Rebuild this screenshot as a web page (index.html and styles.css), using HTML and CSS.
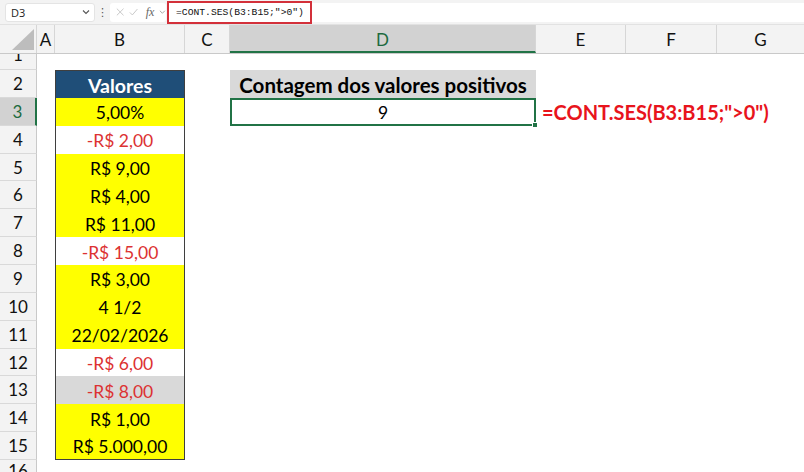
FILE: index.html
```html
<!DOCTYPE html>
<html>
<head>
<meta charset="utf-8">
<link rel="stylesheet" href="styles.css">
</head>
<body>
<div class="topbar">
  <div class="namebox"><span class="nb-text">D3</span><svg class="chev" width="8" height="6" viewBox="0 0 8 6"><path d="M1 1.5 L4 4.5 L7 1.5" fill="none" stroke="#555" stroke-width="1.1"/></svg></div>
  <div class="dots">⋮</div>
  <div class="iconbox">
    <svg width="10" height="10" viewBox="0 0 10 10"><path d="M1 1 L9 9 M9 1 L1 9" stroke="#c4c4c4" stroke-width="1.1" fill="none"/></svg>
    <svg width="11" height="10" viewBox="0 0 11 10"><path d="M1 5.5 L4 8.5 L10 1.5" stroke="#c4c4c4" stroke-width="1.1" fill="none"/></svg>
    <span class="fx">fx</span>
    <svg width="8" height="6" viewBox="0 0 8 6"><path d="M1 1.5 L4 4.5 L7 1.5" fill="none" stroke="#999" stroke-width="1"/></svg>
  </div>
  <div class="formula">=CONT.SES(B3:B15;"&gt;0")</div>
  <div class="formula-rest"></div>
</div>
<div class="colheads">
  <div class="corner"><div class="tri"></div></div>
  <div class="ch w-a">A</div>
  <div class="ch w-b">B</div>
  <div class="ch w-c">C</div>
  <div class="ch w-d sel">D</div>
  <div class="ch w-e">E</div>
  <div class="ch w-f">F</div>
  <div class="ch w-g">G</div>
</div>
<div class="body">
  <div class="rowheads">
    <div class="rh r1"><span>1</span></div>
    <div class="rh">2</div>
    <div class="rh rsel">3</div>
    <div class="rh">4</div>
    <div class="rh">5</div>
    <div class="rh">6</div>
    <div class="rh">7</div>
    <div class="rh">8</div>
    <div class="rh">9</div>
    <div class="rh">10</div>
    <div class="rh">11</div>
    <div class="rh">12</div>
    <div class="rh">13</div>
    <div class="rh">14</div>
    <div class="rh">15</div>
    <div class="rh r16"><span>16</span></div>
  </div>
  <div class="col w-a"></div>
  <div class="col w-b colb">
    <div class="table">
      <div class="cell head">Valores</div>
      <div class="cell yel">5,00%</div>
      <div class="cell neg">-R$ 2,00</div>
      <div class="cell yel">R$ 9,00</div>
      <div class="cell yel">R$ 4,00</div>
      <div class="cell yel">R$ 11,00</div>
      <div class="cell neg">-R$ 15,00</div>
      <div class="cell yel">R$ 3,00</div>
      <div class="cell yel">4 1/2</div>
      <div class="cell yel">22/02/2026</div>
      <div class="cell neg">-R$ 6,00</div>
      <div class="cell neg gray">-R$ 8,00</div>
      <div class="cell yel">R$ 1,00</div>
      <div class="cell yel">R$ 5.000,00</div>
    </div>
  </div>
  <div class="col w-c"></div>
  <div class="col w-d cold">
    <div class="dhead">Contagem dos valores positivos</div>
    <div class="dres">9<div class="handle"></div></div>
  </div>
  <div class="col cole">
    <div class="note">=CONT.SES(B3:B15;"&gt;0")</div>
  </div>
</div>
</body>
</html>
```

FILE: styles.css
```css
* { box-sizing: border-box; }
html, body { margin: 0; padding: 0; }
body {
  width: 804px;
  height: 472px;
  overflow: hidden;
  background: #ffffff;
  font-family: "Lato", "Open Sans", sans-serif;
  color: #000;
}
.topbar {
  height: 25px;
  background: #f3f3f3;
  display: flex;
  align-items: center;
  padding-left: 5px;
  border-bottom: 1px solid #e2e2e2;
}
.namebox {
  width: 90px;
  height: 19px;
  background: #fff;
  border: 1px solid #e4e4e4;
  border-radius: 3px;
  display: flex;
  align-items: center;
  justify-content: space-between;
  padding: 0 4px 0 5px;
  font-family: "Open Sans", sans-serif;
  font-size: 11px;
  color: #222;
}
.dots {
  width: 15px;
  text-align: center;
  font-size: 11px;
  color: #555;
  font-family: "DejaVu Sans", sans-serif;
}
.iconbox {
  width: 56px;
  height: 19px;
  background: #fff;
  border-radius: 3px;
  display: flex;
  align-items: center;
  gap: 5px;
  padding-left: 6px;
}
.fx {
  font-family: "Liberation Serif", serif;
  font-style: italic;
  font-size: 12px;
  color: #666;
  margin-left: 2px;
}
.formula {
  width: 145px;
  height: 23px;
  margin-left: 1px;
  border: 2px solid #d3303a;
  background: #fff;
  font-family: "Liberation Mono", monospace;
  font-size: 9.7px;
  color: #111;
  display: flex;
  align-items: center;
  padding-left: 7px;
}
.formula-rest {
  flex: 1;
  height: 19px;
  background: #fff;
}
.colheads {
  height: 29px;
  display: flex;
  background: #f3f3f3;
  border-bottom: 1px solid #c9c9c9;
}
.corner {
  width: 37px;
  position: relative;
  border-right: 1px solid #d6d6d6;
}
.tri {
  position: absolute;
  right: 2px;
  bottom: 3px;
  width: 0;
  height: 0;
  border-left: 22px solid transparent;
  border-bottom: 21px solid #bdbdbd;
}
.ch {
  display: flex;
  align-items: center;
  justify-content: center;
  font-size: 17px;
  color: #111;
  border-right: 1px solid #d6d6d6;
}
.ch.sel {
  background: #d2d2d2;
  color: #1d6a3e;
  border-bottom: 2px solid #217346;
  padding-top: 2px;
}
.w-a { width: 18px; }
.w-b { width: 130px; }
.w-c { width: 45px; }
.w-d { width: 306px; }
.w-e { width: 90px; }
.w-f { width: 91px; }
.w-g { flex: 1; border-right: none; }
.body {
  display: flex;
  height: 418px;
}
.rowheads {
  width: 37px;
  background: #f3f3f3;
  display: flex;
  flex-direction: column;
}
.rh {
  height: 27.86px;
  flex: none;
  display: flex;
  align-items: center;
  justify-content: center;
  font-size: 17px;
  color: #111;
  border-bottom: 1px solid #d9d9d9;
  border-right: 1px solid #c9c9c9;
}
.rh.r1 {
  height: 16px;
  overflow: hidden;
  align-items: flex-start;
}
.rh.r1 span {
  display: block;
  line-height: 20px;
  margin-top: -9px;
}
.rh.r16 {
  height: 12px;
  overflow: hidden;
  align-items: flex-start;
  border-bottom: none;
}
.rh.r16 span {
  display: block;
  line-height: 20px;
  margin-top: 1px;
}
.rh.rsel {
  background: #d2d2d2;
  color: #1d6a3e;
  border-right: 2px solid #217346;
}
.col { flex: none; }
.colb, .cold { padding-top: 16px; }
.table {
  border: 1px solid #3f3f3f;
  width: 130px;
}
.cell {
  height: 27.86px;
  display: flex;
  align-items: center;
  justify-content: center;
  font-size: 17.5px;
  padding-top: 2px;
  background: #fff;
}
.table .cell:first-child { height: 26.86px; }
.table .cell:last-child { height: 26.86px; }
.cell.head {
  background: #1f4e78;
  color: #fff;
  font-weight: 700;
  font-size: 19.5px;
}
.cell.yel { background: #ffff00; }
.cell.neg { color: #dc3232; }
.cell.gray { background: #d9d9d9; }
.dhead {
  height: 27.86px;
  background: #d9d9d9;
  font-weight: 700;
  font-size: 20.5px;
  display: flex;
  align-items: center;
  justify-content: center;
  padding-top: 2px;
}
.dres {
  position: relative;
  height: 28px;
  border: 2px solid #217346;
  display: flex;
  align-items: center;
  justify-content: center;
  font-size: 17.5px;
  padding-top: 1px;
}
.handle {
  position: absolute;
  right: -4px;
  bottom: -4px;
  width: 6px;
  height: 6px;
  background: #217346;
  border: 1px solid #fff;
}
.cole {
  flex: 1;
  padding-top: 43.86px;
}
.note {
  height: 28px;
  display: flex;
  align-items: center;
  padding-left: 6px;
  color: #e8141c;
  font-weight: 700;
  font-size: 20px;
}
```
